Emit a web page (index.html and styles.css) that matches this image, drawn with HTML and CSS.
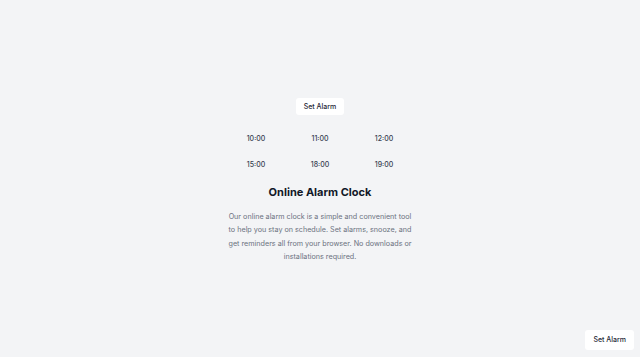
FILE: index.html
```html
<!DOCTYPE html>
<html lang="en">
<head>
<meta charset="utf-8">
<title>Online Alarm Clock</title>
<link rel="stylesheet" href="styles.css">
</head>
<body>
<main class="app">
  <button class="btn">Set Alarm</button>
  <div class="times">
    <span class="time">10:00</span>
    <span class="time">11:00</span>
    <span class="time">12:00</span>
    <span class="time">15:00</span>
    <span class="time">18:00</span>
    <span class="time">19:00</span>
  </div>
  <h1 class="title">Online Alarm Clock</h1>
  <p class="desc">Our online alarm clock is a simple and convenient tool to help you stay on schedule. Set alarms, snooze, and get reminders all from your browser. No downloads or installations required.</p>
</main>
<button class="btn btn-corner">Set Alarm</button>
</body>
</html>
```
FILE: styles.css
```css
* { box-sizing: border-box; }
html, body { margin: 0; padding: 0; }
body {
  background: #f3f4f6;
  font-family: Inter, "Noto Sans", sans-serif;
  color: #1f2937;
  min-height: 100vh;
}
.app {
  display: flex;
  flex-direction: column;
  align-items: center;
  padding-top: 98px;
}
.btn {
  background: #ffffff;
  border: none;
  border-radius: 3px;
  font-family: Inter, "Noto Sans", sans-serif;
  font-size: 7px;
  font-weight: 500;
  color: #1f2937;
  padding: 0 8px;
  height: 17px;
  line-height: 17px;
}
.btn-corner {
  position: fixed;
  right: 6px;
  bottom: 7px;
  height: 20px;
  line-height: 20px;
  padding: 0 8px;
}
.times {
  margin-top: 11px;
  display: grid;
  grid-template-columns: repeat(3, 64px);
  grid-auto-rows: 26px;
}
.time {
  font-size: 7px;
  font-weight: 500;
  color: #374151;
  text-align: center;
  line-height: 26px;
}
.title {
  margin: 4px 0 0;
  font-size: 11px;
  font-weight: 700;
  color: #111827;
  line-height: 20px;
}
.desc {
  margin: 8px 0 0;
  width: 188px;
  text-align: center;
  font-size: 7.2px;
  line-height: 13.3px;
  color: #6b7280;
}
```
